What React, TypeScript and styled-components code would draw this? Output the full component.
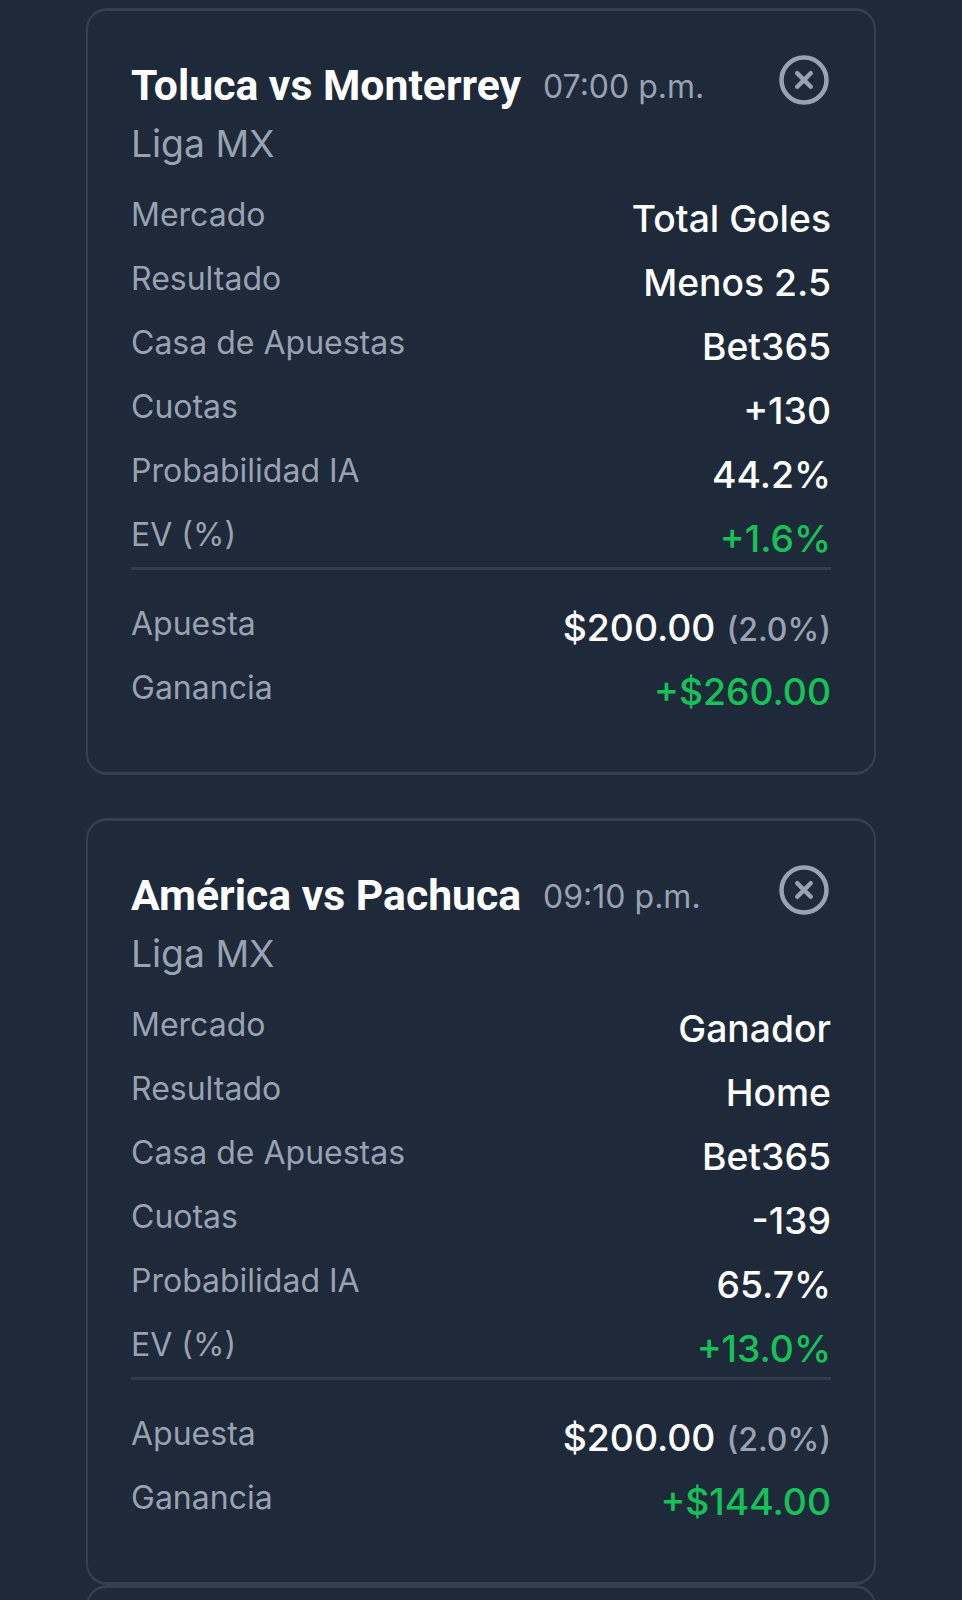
import React from "react";
import styled, { createGlobalStyle } from "styled-components";
import { CircleX } from "lucide-react";

const GlobalStyle = createGlobalStyle`
  * { box-sizing: border-box; }
  html, body { margin: 0; background: #1e2939; }
  body { font-family: Inter, "Liberation Sans", sans-serif; }
`;

const Page = styled.main`
  height: 1600px;
  overflow: hidden;
  padding: 8px 86px 0;
  background: #1e2939;
`;

const Card = styled.article<{ $gap: number }>`
  height: 767px;
  margin-bottom: ${(p) => p.$gap}px;
  padding: 42px 43px 0;
  border: solid #344051;
  border-width: 3px 2px;
  border-radius: 21px;
`;

const Header = styled.header`
  display: flex;
  justify-content: space-between;
  align-items: flex-start;
  height: 63px;
`;

const TitleGroup = styled.div`
  display: flex;
  align-items: flex-start;
  gap: 22px;
  white-space: nowrap;
`;

const Title = styled.h2`
  margin: 0;
  font: 700 42.7px/64px Roboto, "Liberation Sans", sans-serif;
  color: #fff;
`;

const Time = styled.span`
  padding-top: 10.5px;
  font-size: 32px;
  line-height: 46px;
  color: #98a2b3;
`;

const CloseButton = styled.button`
  display: flex;
  padding: 0;
  border: 0;
  background: none;
  color: #98a2b3;
`;

const League = styled.div`
  font-size: 37.3px;
  line-height: 55px;
  color: #98a2b3;
`;

const Rows = styled.dl<{ $top: number }>`
  display: flex;
  flex-direction: column;
  gap: 9.05px;
  margin: ${(p) => p.$top}px 0 0;
`;

const Row = styled.div`
  display: flex;
  justify-content: space-between;
  align-items: flex-start;
  height: 55px;
  white-space: nowrap;
`;

const Label = styled.dt`
  font-size: 32px;
  line-height: 46px;
  color: #98a2b3;
`;

const Value = styled.dd<{ $positive?: boolean }>`
  margin: 0;
  font-size: 37.3px;
  font-weight: 500;
  line-height: 53px;
  color: ${(p) => (p.$positive ? "#16c258" : "#fff")};
`;

const Share = styled.span`
  margin-left: 1px;
  font-size: 32px;
  color: #98a2b3;
`;

const Divider = styled.hr`
  height: 3px;
  margin: 0;
  border: 0;
  background: #313d4e;
`;

interface Bet {
  match: string;
  time: string;
  market: string;
  result: string;
  odds: string;
  probability: string;
  ev: string;
  profit: string;
}

const bets: Bet[] = [
  { match: "Toluca vs Monterrey", time: "07:00 p.m.", market: "Total Goles", result: "Menos 2.5", odds: "+130", probability: "44.2%", ev: "+1.6%", profit: "+$260.00" },
  { match: "América vs Pachuca", time: "09:10 p.m.", market: "Ganador", result: "Home", odds: "-139", probability: "65.7%", ev: "+13.0%", profit: "+$144.00" },
];

const Field = ({ label, positive, children }: { label: string; positive?: boolean; children: React.ReactNode }) => (
  <Row>
    <Label>{label}</Label>
    <Value $positive={positive}>{children}</Value>
  </Row>
);

const BetCard = ({ bet, gap }: { bet: Bet; gap: number }) => (
  <Card $gap={gap}>
    <Header>
      <TitleGroup>
        <Title>{bet.match}</Title>
        <Time>{bet.time}</Time>
      </TitleGroup>
      <CloseButton aria-label="Cerrar">
        <CircleX size={54} />
      </CloseButton>
    </Header>
    <League>Liga MX</League>
    <Rows $top={20.7}>
      <Field label="Mercado">{bet.market}</Field>
      <Field label="Resultado">{bet.result}</Field>
      <Field label="Casa de Apuestas">Bet365</Field>
      <Field label="Cuotas">{bet.odds}</Field>
      <Field label="Probabilidad IA">{bet.probability}</Field>
      <Field label="EV (%)" positive>{bet.ev}</Field>
    </Rows>
    <Divider />
    <Rows $top={30.6}>
      <Field label="Apuesta">
        $200.00 <Share>(2.0%)</Share>
      </Field>
      <Field label="Ganancia" positive>{bet.profit}</Field>
    </Rows>
  </Card>
);

export default function App() {
  return (
    <>
      <GlobalStyle />
      <Page>
        <BetCard bet={bets[0]} gap={43} />
        <BetCard bet={bets[1]} gap={0} />
        <Card $gap={0} />
      </Page>
    </>
  );
}
